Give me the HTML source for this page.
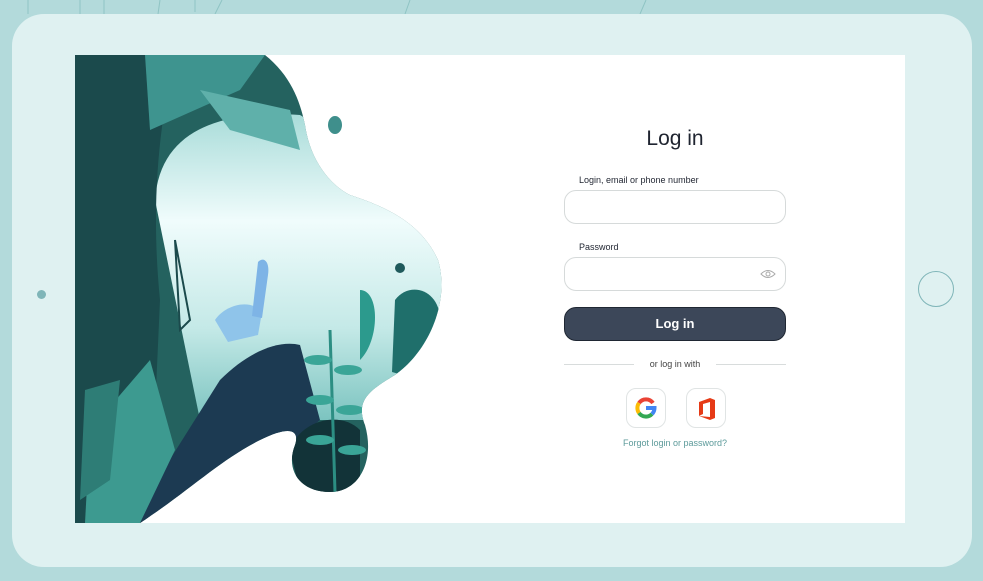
<!DOCTYPE html>
<html><head><style>
body{margin:0;width:983px;height:581px;background:#b3dadb;position:relative;overflow:hidden;font-family:"Liberation Sans",sans-serif}
.tab{position:absolute;left:12px;top:14px;width:960px;height:553px;background:#dff1f1;border-radius:32px}
.scr{position:absolute;left:75px;top:55px;width:830px;height:468px;background:#fff;overflow:hidden}
.dot{position:absolute;left:37px;top:290px;width:9px;height:9px;border-radius:50%;background:#7fb5b8}
.home{position:absolute;left:918px;top:271px;width:36px;height:36px;border-radius:50%;border:1.5px solid #7fb5b8;box-sizing:border-box}
.t{position:absolute;color:#1f2430}
.in{position:absolute;left:564px;width:222px;height:34px;border:1px solid #d6dada;border-radius:12px;box-sizing:border-box;background:#fff}
.btn{position:absolute;left:564px;top:307px;width:222px;height:34px;border-radius:12px;background:#3c4759;border:1px solid #1f2733;box-sizing:border-box;color:#fff;font-size:13px;font-weight:bold;text-align:center;line-height:32px}
.soc{position:absolute;top:388px;width:40px;height:40px;border:1px solid #e0e4e4;border-radius:10px;box-sizing:border-box;background:#fff}
</style></head><body>
<svg style="position:absolute;left:0;top:0" width="983" height="14"><g stroke="#8fc4c4" stroke-width="1"><path d="M28 0 V14 M80 0 V14 M104 0 V14 M160 0 L158 14 M195 0 V12 M215 14 L222 0 M410 0 L405 14 M640 14 L646 0"/></g></svg>
<div class="tab"></div>
<div class="dot"></div><div class="home"></div>
<div class="scr">
<svg width="830" height="468" viewBox="75 55 830 468">
<defs><clipPath id="c"><path d="M75 55 L265 55 C290 75 300 100 305 125 C310 160 330 185 350 195 C380 205 420 220 438 260 C450 300 430 350 395 375 C370 390 355 400 365 425 C375 460 360 492 330 492 C300 492 285 470 295 445 C300 430 290 425 260 440 C220 460 190 490 140 523 L75 523 Z"/></clipPath>
<linearGradient id="g" x1="0" y1="0" x2="0" y2="1"><stop offset="0" stop-color="#a9dcd9"/><stop offset=".35" stop-color="#f0fcfc"/><stop offset=".7" stop-color="#c4e9e7"/><stop offset="1" stop-color="#7cc4c0"/></linearGradient></defs>
<g clip-path="url(#c)">
<rect x="75" y="55" width="400" height="468" fill="#24625f"/>
<path d="M155 200 C160 130 220 110 300 115 L445 200 L445 420 L200 420 Z" fill="url(#g)"/>
<path d="M75 55 L175 55 C160 120 150 200 160 300 L150 523 L75 523Z" fill="#1b4a4c"/>
<path d="M145 55 L265 55 L240 90 L150 130 Z" fill="#3e948f"/>
<path d="M200 90 L290 110 L300 150 L230 130Z" fill="#5fb0aa"/>
<path d="M175 240 L190 320 L180 330 Z" stroke="#1b4a4c" stroke-width="2" fill="none"/>
<path d="M220 380 C250 350 280 340 300 345 L320 420 L260 470 L170 523 L130 523 Z" fill="#1c3a52"/>
<path d="M215 320 C225 305 250 298 262 312 L258 335 L228 342 Z" fill="#8fc4ea"/>
<path d="M258 262 C264 256 270 262 268 275 L262 318 L252 316 Z" fill="#7eb4e6"/>
<path d="M90 430 L150 360 L175 450 L140 523 L85 523 Z" fill="#3d9a90"/>
<path d="M85 390 L120 380 L110 480 L80 500Z" fill="#2e7d76"/>
<path d="M395 300 C410 280 440 290 440 320 L420 380 L392 372 Z" fill="#1f6f6b"/>
<path d="M360 290 C380 290 380 340 360 360 Z" fill="#2c9a8d"/>
<circle cx="400" cy="268" r="5" fill="#1f5a5c"/>
<path d="M290 450 C300 420 340 410 360 430 L360 492 L300 492 Z" fill="#123338"/>
<path d="M330 330 L335 492" stroke="#2c8e83" stroke-width="3"/>
<g fill="#3aa597"><ellipse cx="318" cy="360" rx="14" ry="5"/><ellipse cx="348" cy="370" rx="14" ry="5"/><ellipse cx="320" cy="400" rx="14" ry="5"/><ellipse cx="350" cy="410" rx="14" ry="5"/><ellipse cx="320" cy="440" rx="14" ry="5"/><ellipse cx="352" cy="450" rx="14" ry="5"/></g>
</g>
<ellipse cx="335" cy="125" rx="7" ry="9" fill="#3f8f8c"/>
</svg>
</div>
<div class="t" style="left:564px;top:127px;width:222px;text-align:center;font-size:21px">Log in</div>
<div class="t" style="left:579px;top:175px;font-size:9px">Login, email or phone number</div>
<div class="in" style="top:190px"></div>
<div class="t" style="left:579px;top:242px;font-size:9px">Password</div>
<div class="in" style="top:257px"><svg style="position:absolute;right:9px;top:11px" width="16" height="10" viewBox="0 0 16 10"><path d="M1 5 Q8 -2 15 5 Q8 12 1 5Z" fill="none" stroke="#aaa"/><circle cx="8" cy="5" r="2" fill="none" stroke="#aaa"/></svg></div>
<div class="btn">Log in</div>
<div style="position:absolute;left:564px;top:364px;width:70px;height:1px;background:#d8dcdc"></div>
<div style="position:absolute;left:716px;top:364px;width:70px;height:1px;background:#d8dcdc"></div>
<div class="t" style="left:564px;top:359px;width:222px;text-align:center;font-size:9px;color:#444">or log in with</div>
<div class="soc" style="left:626px"><svg style="position:absolute;left:8px;top:8px" width="22" height="22" viewBox="0 0 22 22"><path d="M18 6 A8.5 8.5 0 0 0 4 6" stroke="#ea4335" stroke-width="4" fill="none"/><path d="M4 6 A8.5 8.5 0 0 0 4 16" stroke="#fbbc05" stroke-width="4" fill="none"/><path d="M4 16 A8.5 8.5 0 0 0 17 17" stroke="#34a853" stroke-width="4" fill="none"/><path d="M17 17 A8.5 8.5 0 0 0 19.5 11 L11 11" stroke="#4285f4" stroke-width="4" fill="none"/></svg></div>
<div class="soc" style="left:686px"><svg style="position:absolute;left:10px;top:9px" width="20" height="22" viewBox="0 0 20 22"><path d="M2 4 L13 0 L18 2 L18 20 L13 22 L2 18 L13 19 L13 4 L6 6 L6 16 L2 18Z" fill="#e63a16"/></svg></div>
<div class="t" style="left:564px;top:438px;width:222px;text-align:center;font-size:9px;color:#5c9a9a">Forgot login or password?</div>
</body></html>
